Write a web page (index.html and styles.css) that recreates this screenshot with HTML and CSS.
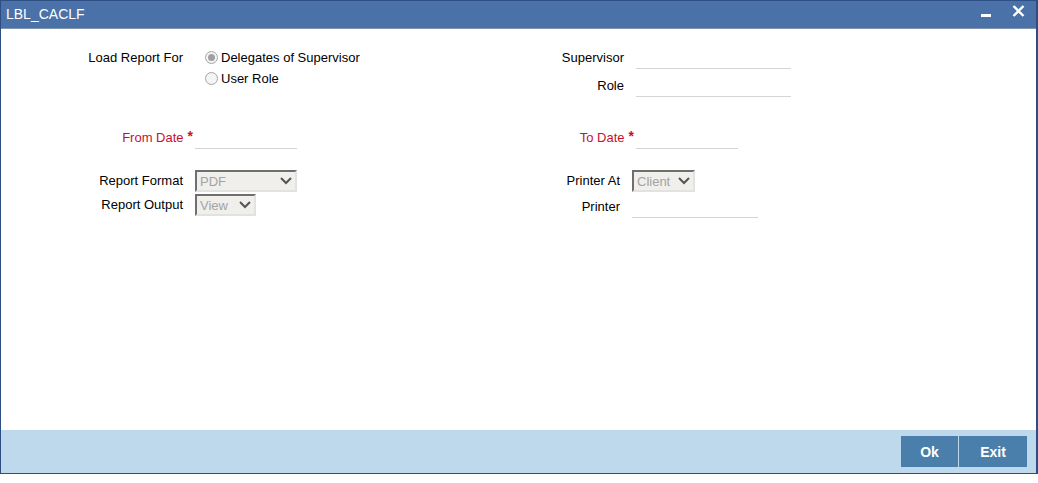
FILE: index.html
```html
<!DOCTYPE html>
<html lang="en">
<head>
    <meta charset="UTF-8">
    <meta name="viewport" content="width=device-width, initial-scale=1.0">
    <title>LBL_CACLF</title>
    <link rel="stylesheet" href="styles.css">
</head>
<body>
    <div class="window">
        <div class="titlebar">
            <span class="title">LBL_CACLF</span>
            <div class="controls">
                <span class="btn-min"></span>
                <svg class="btn-close" width="13" height="12" viewBox="0 0 13 12">
                    <path d="M1.5 1 L11.5 11 M11.5 1 L1.5 11" stroke="#fff" stroke-width="2.4" fill="none"/>
                </svg>
            </div>
        </div>

        <div class="content">
            <!-- left side -->
            <div class="col col-left">
                <div class="row row-radio">
                    <label class="lbl">Load Report For</label>
                    <div class="radios">
                        <div class="radio-item"><span class="radio checked"></span>Delegates of Supervisor</div>
                        <div class="radio-item"><span class="radio"></span>User Role</div>
                    </div>
                </div>
                <div class="row row-from">
                    <label class="lbl req">From Date<span class="star">*</span></label>
                    <div class="field w102"></div>
                </div>
                <div class="row row-format">
                    <label class="lbl">Report Format</label>
                    <div class="select w102">
                        <span>PDF</span>
                        <svg width="12" height="8" viewBox="0 0 12 8"><path d="M1 1 L6 6 L11 1" stroke="#555" stroke-width="2" fill="none"/></svg>
                    </div>
                </div>
                <div class="row row-output">
                    <label class="lbl">Report Output</label>
                    <div class="select w61">
                        <span>View</span>
                        <svg width="12" height="8" viewBox="0 0 12 8"><path d="M1 1 L6 6 L11 1" stroke="#555" stroke-width="2" fill="none"/></svg>
                    </div>
                </div>
            </div>

            <!-- right side -->
            <div class="col col-right">
                <div class="row row-super">
                    <label class="lbl">Supervisor</label>
                    <div class="field w155"></div>
                </div>
                <div class="row row-role">
                    <label class="lbl">Role</label>
                    <div class="field w155"></div>
                </div>
                <div class="row row-to">
                    <label class="lbl req">To Date<span class="star">*</span></label>
                    <div class="field w102"></div>
                </div>
                <div class="row row-printat narrow">
                    <label class="lbl">Printer At</label>
                    <div class="select w63">
                        <span>Client</span>
                        <svg width="12" height="8" viewBox="0 0 12 8"><path d="M1 1 L6 6 L11 1" stroke="#555" stroke-width="2" fill="none"/></svg>
                    </div>
                </div>
                <div class="row row-printer narrow">
                    <label class="lbl">Printer</label>
                    <div class="field w126"></div>
                </div>
            </div>
        </div>

        <div class="footer">
            <button class="action ok">Ok</button>
            <button class="action exit">Exit</button>
        </div>
    </div>
</body>
</html>
```

FILE: styles.css
```css
body {
    margin: 0;
    background: #fff;
    font-family: "Liberation Sans", Arial, sans-serif;
    font-size: 13px;
    color: #000;
}

.window {
    width: 1038px;
    height: 474px;
    box-sizing: border-box;
    border-left: 1px solid #2d4e82;
    border-right: 2px solid #2d4e82;
    border-bottom: 1px solid #2d4e82;
    display: flex;
    flex-direction: column;
}

/* Title bar */
.titlebar {
    background: #4a72a8;
    border-top: 1px solid #2d4e82;
    border-bottom: 1px solid #8096ad;
    box-sizing: border-box;
    height: 29px;
    display: flex;
    align-items: center;
    justify-content: space-between;
    padding: 0 11px 0 5px;
}

.title {
    color: #fff;
    font-size: 14px;
    margin-top: -2px;
}

.controls {
    display: flex;
    align-items: center;
    gap: 21px;
    margin-top: -8px;
}

.btn-min {
    display: block;
    width: 10px;
    height: 3px;
    background: #fff;
    margin-top: 9px;
}

/* Form area */
.content {
    flex: 1;
    display: flex;
}

.col {
    display: flex;
    flex-direction: column;
    padding-top: 18px;
}

.col-left {
    width: 499px;
}

.row {
    display: grid;
    grid-template-columns: 182px auto;
    column-gap: 12px;
    align-items: start;
}

.col-right .row {
    grid-template-columns: 124px auto;
}

.col-right .row.narrow {
    grid-template-columns: 120px auto;
}

.lbl {
    display: flex;
    justify-content: flex-end;
    line-height: 22px;
    white-space: nowrap;
}

.lbl.req {
    color: #c8102e;
}

.star {
    font-weight: bold;
    font-size: 14px;
    margin-left: 4px;
    margin-right: -10px;
    line-height: 18px;
}

.row-radio .lbl {
    line-height: 21px;
}

.radios {
    padding-left: 10px;
}

.radio-item {
    display: flex;
    align-items: center;
    height: 21px;
}

.radio {
    width: 11px;
    height: 11px;
    border: 1px solid #a5a5a5;
    border-radius: 50%;
    background: #f4f4f4;
    margin-right: 3px;
    position: relative;
}

.radio.checked::after {
    content: "";
    position: absolute;
    left: 2px;
    top: 2px;
    width: 7px;
    height: 7px;
    border-radius: 50%;
    background: #a0a0a0;
}

.field {
    height: 22px;
    box-sizing: border-box;
    border-bottom: 1px solid #d4d4d4;
}

.select {
    height: 22px;
    box-sizing: border-box;
    border: 2px solid;
    border-color: #6f6f6f #e2e2e2 #e2e2e2 #6f6f6f;
    background: #f0efeb;
    color: #a3a3a3;
    font-size: 13px;
    display: flex;
    align-items: center;
    justify-content: space-between;
    padding: 0 3px 0 3px;
}

.w61 { width: 61px; }
.w63 { width: 63px; }
.w102 { width: 102px; }
.w126 { width: 126px; }
.w155 { width: 155px; }

.row-from { margin-top: 38px; }
.row-format { margin-top: 21px; }
.row-output { margin-top: 2px; }

.row-role { margin-top: 6px; }
.row-to { margin-top: 30px; }
.row-printat { margin-top: 21px; }
.row-printer { margin-top: 4px; }

/* Footer */
.footer {
    height: 43px;
    background: #bed9ec;
    display: flex;
    justify-content: flex-end;
    align-items: flex-start;
    gap: 1px;
    padding: 6px 9px 0 0;
    box-sizing: border-box;
}

.action {
    height: 31px;
    border: none;
    background: #4a7fab;
    color: #fff;
    font-family: "Liberation Sans", Arial, sans-serif;
    font-size: 14px;
    font-weight: bold;
    cursor: pointer;
}

.ok { width: 57px; }
.exit { width: 68px; }
```
